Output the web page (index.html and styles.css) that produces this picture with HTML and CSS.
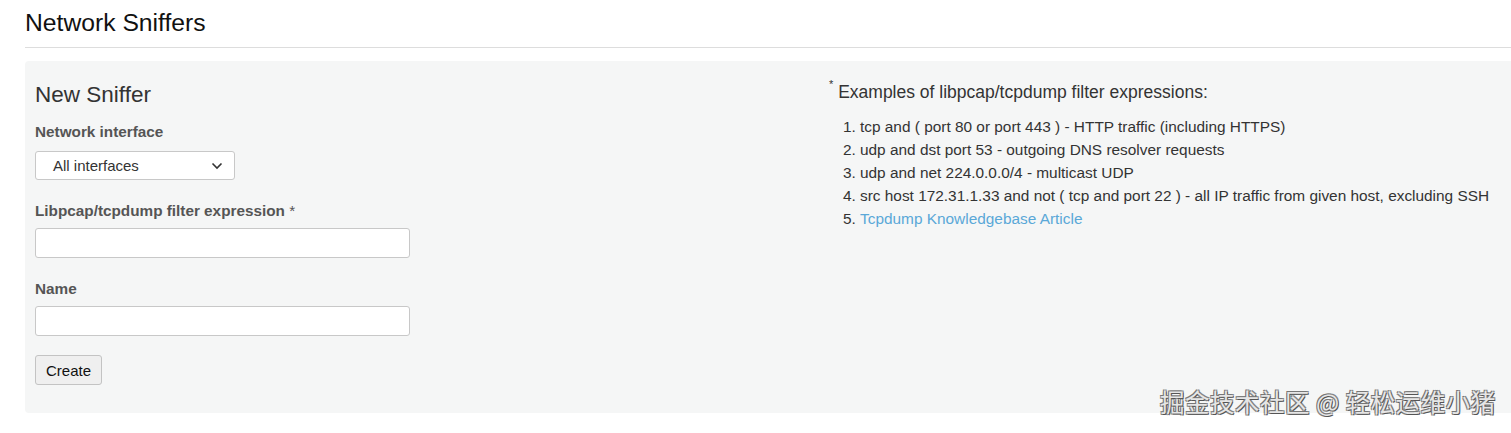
FILE: index.html
```html
<!DOCTYPE html>
<html>
<head>
<meta charset="utf-8">
<link rel="stylesheet" href="styles.css">
</head>
<body>
<div class="page">
  <h1 class="title">Network Sniffers</h1>
  <div class="rule"></div>
  <div class="panel">
    <div class="col-left">
      <h2 class="subtitle">New Sniffer</h2>
      <div class="field first">
        <label class="label">Network interface</label>
        <div class="select">
          <span>All interfaces</span>
          <svg class="chev" width="12" height="8" viewBox="0 0 12 8"><path d="M1.5 1.5 L6 6 L10.5 1.5" fill="none" stroke="#333" stroke-width="1.6"/></svg>
        </div>
      </div>
      <div class="field">
        <label class="label">Libpcap/tcpdump filter expression <span class="req">*</span></label>
        <div class="input"></div>
      </div>
      <div class="field">
        <label class="label">Name</label>
        <div class="input"></div>
      </div>
      <button class="btn">Create</button>
    </div>
    <div class="col-right">
      <div class="ex-head"><sup class="star">*</sup> Examples of libpcap/tcpdump filter expressions:</div>
      <ol class="ex-list">
        <li>tcp and ( port 80 or port 443 ) - HTTP traffic (including HTTPS)</li>
        <li>udp and dst port 53 - outgoing DNS resolver requests</li>
        <li>udp and net 224.0.0.0/4 - multicast UDP</li>
        <li>src host 172.31.1.33 and not ( tcp and port 22 ) - all IP traffic from given host, excluding SSH</li>
        <li><a class="link">Tcpdump Knowledgebase Article</a></li>
      </ol>
    </div>
  </div>
</div>
<div class="watermark">掘金技术社区 @ 轻松运维小猪</div>
</body>
</html>
```
FILE: styles.css
```css
html, body {
  margin: 0;
  padding: 0;
  background: #fff;
  font-family: "Liberation Sans", Arial, sans-serif;
  overflow: hidden;
}
.page {
  padding-left: 25px;
}
.title {
  margin: 0;
  padding-top: 9px;
  font-size: 24.7px;
  font-weight: normal;
  line-height: 28px;
  color: #111;
}
.rule {
  margin-top: 10px;
  height: 1px;
  background: #ddd;
}
.panel {
  margin-top: 13px;
  background: #f5f6f6;
  border-radius: 4px 0 0 4px;
  height: 352px;
  display: grid;
  grid-template-columns: 794px 1fr;
  box-sizing: border-box;
  padding-left: 10px;
}
.subtitle {
  margin: 20px 0 0 0;
  font-size: 22.5px;
  font-weight: normal;
  line-height: 28px;
  color: #333;
}
.field {
  margin-top: 21px;
  display: flex;
  flex-direction: column;
}
.field.first {
  margin-top: 13px;
}
.label {
  font-size: 15.3px;
  font-weight: bold;
  color: #555;
  line-height: 20px;
  margin-bottom: 7px;
}
.first .label {
  margin-bottom: 9px;
}
.req {
  font-weight: normal;
  color: #555;
}
.select {
  width: 200px;
  height: 29px;
  box-sizing: border-box;
  background: #fff;
  border: 1px solid #c8c8c8;
  border-radius: 3px;
  display: flex;
  align-items: center;
  justify-content: space-between;
  padding: 0 11px 0 17px;
  font-size: 15px;
  color: #333;
}
.chev {
  display: block;
}
.input {
  width: 375px;
  height: 30px;
  box-sizing: border-box;
  background: #fff;
  border: 1px solid #c8c8c8;
  border-radius: 3px;
}
.btn {
  margin-top: 19px;
  width: 67px;
  height: 30px;
  font-family: "Liberation Sans", Arial, sans-serif;
  font-size: 15px;
  color: #111;
  background: #efefef;
  border: 1px solid #c3c3c3;
  border-radius: 3px;
  padding: 0;
}
.col-right {
  padding-top: 19px;
}
.ex-head {
  font-size: 17.5px;
  color: #333;
  line-height: 24px;
}
.star {
  font-size: 11px;
  vertical-align: top;
  line-height: 14px;
  position: relative;
  top: -3px;
}
.ex-list {
  margin: 11px 0 0 0;
  padding-left: 31px;
  font-size: 15.4px;
  line-height: 23px;
  color: #333;
}
.link {
  color: #5aa8d8;
}
.watermark {
  position: absolute;
  left: 1160px;
  top: 386px;
  font-family: "Noto Sans CJK SC", sans-serif;
  font-size: 24.5px;
  line-height: 32px;
  color: #e6e6e6;
  text-shadow: -1px -1px 0 #777, 1px 1px 0 #555, 1px -1px 0 #888, -1px 1px 0 #888;
  letter-spacing: 0.5px;
}
```
